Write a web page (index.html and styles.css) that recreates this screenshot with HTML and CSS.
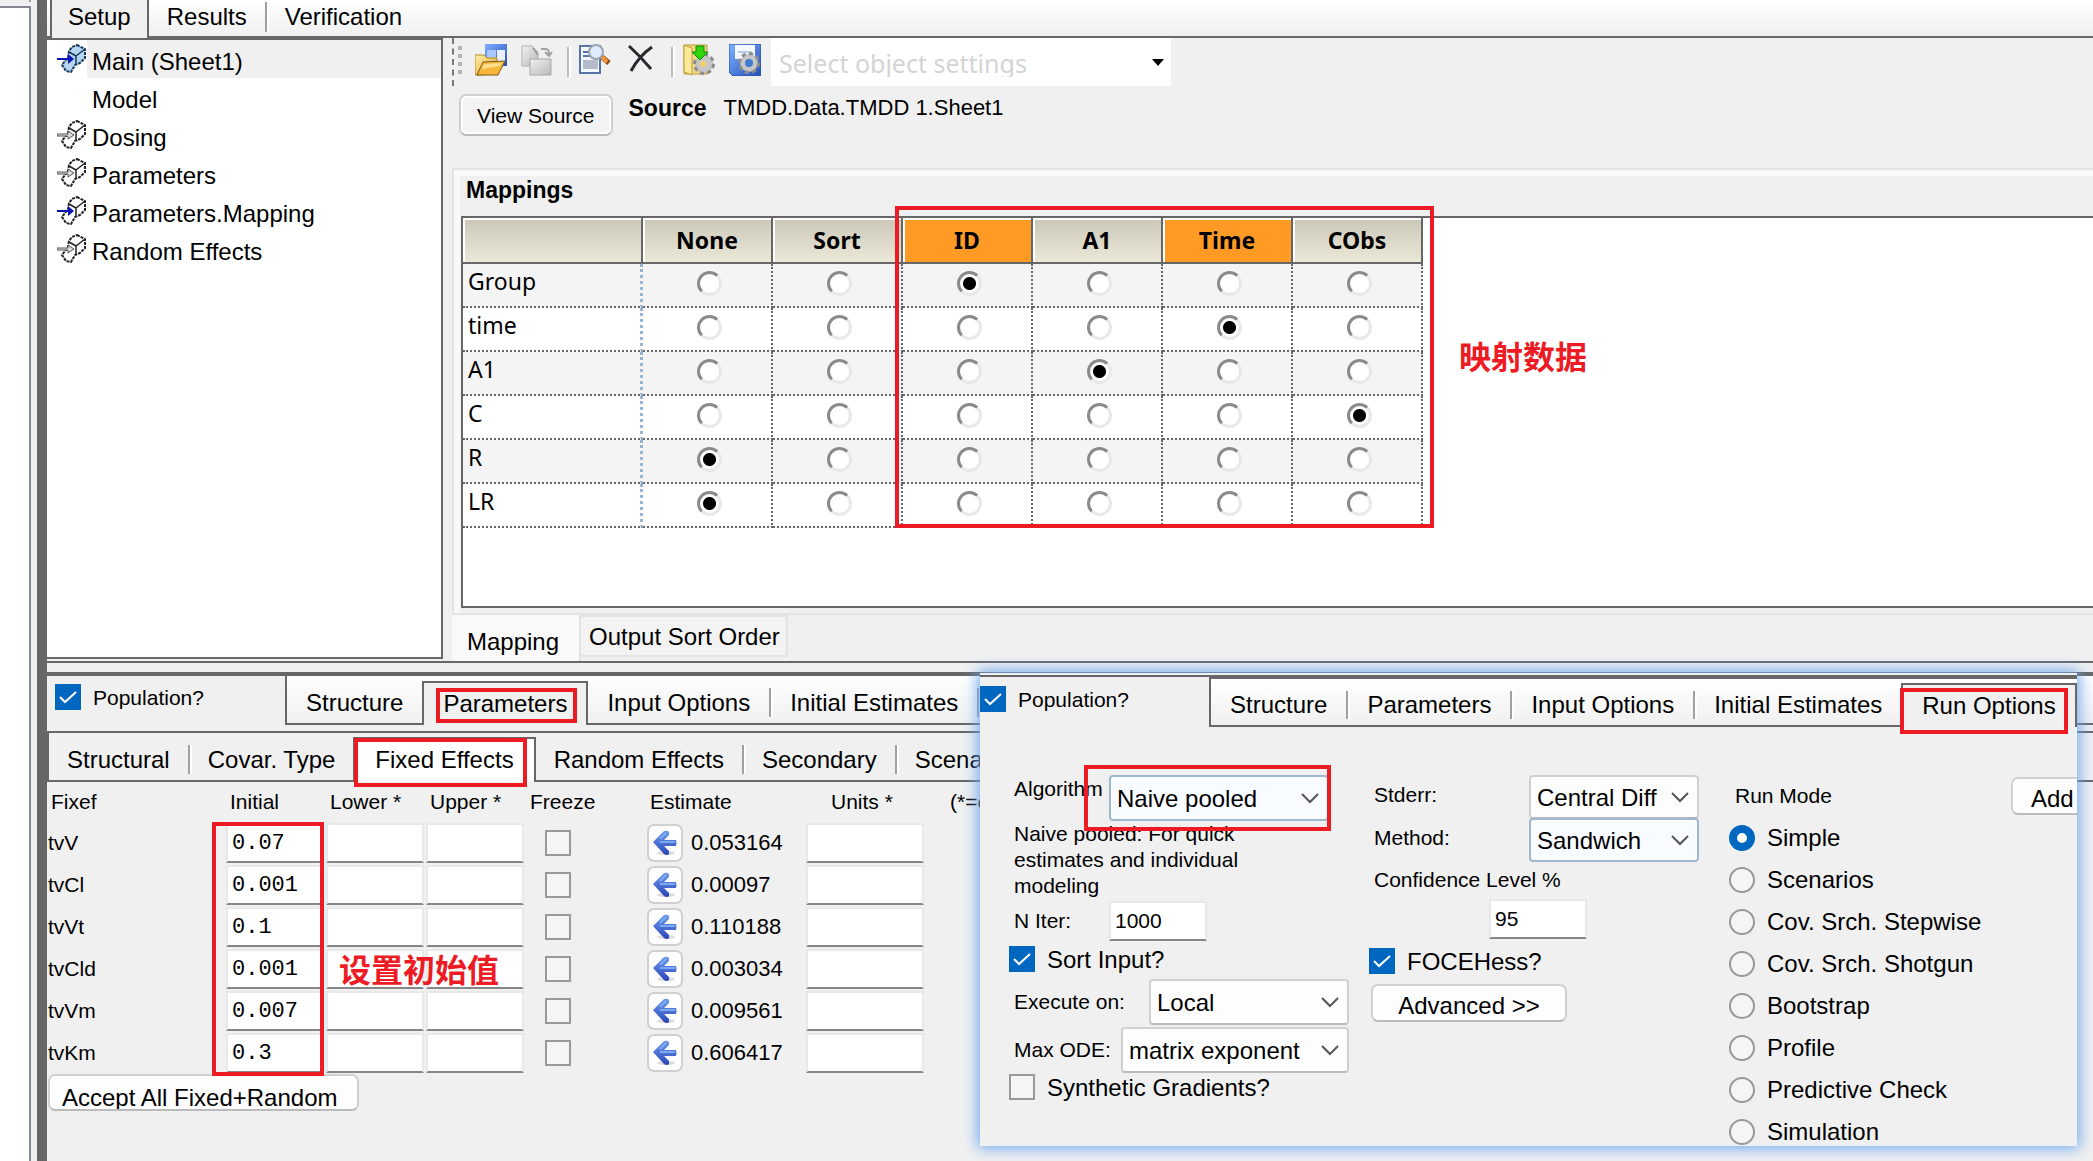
FILE: index.html
```html
<!DOCTYPE html>
<html lang="en">
<head>
<meta charset="utf-8">
<title>Setup</title>
<link rel="stylesheet" href="styles.css">
</head>
<body>
<!-- shared icon shapes -->
<svg class="defs" aria-hidden="true">
    <defs>
        <linearGradient id="gFolder" x1="0" y1="0" x2="1" y2="1"><stop offset="0" stop-color="#fff0a8"/><stop offset="1" stop-color="#e3a02a"/></linearGradient>
        <linearGradient id="gBlue" x1="0" y1="0" x2="1" y2="1"><stop offset="0" stop-color="#7fb0ff"/><stop offset="1" stop-color="#2450b8"/></linearGradient>
        <linearGradient id="gArrow" x1="0" y1="0" x2="0" y2="1"><stop offset="0" stop-color="#6f9ff0"/><stop offset="1" stop-color="#2a43b8"/></linearGradient>
        <linearGradient id="gGrey" x1="0" y1="0" x2="1" y2="1"><stop offset="0" stop-color="#f2f2f2"/><stop offset="1" stop-color="#b8b8b8"/></linearGradient>
        <symbol id="link" viewBox="0 0 30 30">
            <path d="M20 1l8 4v9l-5 5-5 2-4 7-5-1-4-6 6-8 1-6 3-4z" stroke-width="2" stroke-dasharray="3 1"/>
            <path d="M12 8l7 4v8M19 12l9-7" fill="none" stroke-width="1.5"/>
        </symbol>
        <symbol id="left" viewBox="0 0 24 26">
            <ellipse cx="13" cy="23" rx="9" ry="2" fill="#dcdcdc"/>
            <path d="M0 12L11 1q4-1 5 1v3l-5 5h12q1 3 0 6H11l5 5v3q-2 2-5 0z" fill="url(#gArrow)"/>
            <path d="M7 12h15M13 3l-6 6" stroke="#79aaf2" stroke-width="2"/>
        </symbol>
        <symbol id="gear" viewBox="0 0 24 24">
            <circle cx="12" cy="12" r="9" fill="#b9b9b9" stroke="#8e8e8e" stroke-width="4" stroke-dasharray="4 3"/>
            <circle cx="12" cy="12" r="8" fill="#c6c6c6"/>
        </symbol>
    </defs>
</svg>

<div class="side">
    <div class="side-stub"></div>
    <div class="side-box"></div>
</div>

<div class="main">
    <div class="tabs toptabs">
        <button class="tab active">Setup</button>
        <button class="tab">Results</button><span class="sep"></span>
        <button class="tab">Verification</button>
    </div>

    <div class="upper">
        <ul class="tree">
            <li class="selected"><svg class="main-link"><use href="#link"/><path d="M0 14h11v-4l6 5-6 5v-4H0z"/></svg><span>Main (Sheet1)</span></li>
            <li><svg></svg><span>Model</span></li>
            <li><svg class="empty-link"><use href="#link"/><path d="M0 14h11v-3l6 4-6 4v-3H0z"/></svg><span>Dosing</span></li>
            <li><svg class="empty-link"><use href="#link"/><path d="M0 14h11v-3l6 4-6 4v-3H0z"/></svg><span>Parameters</span></li>
            <li><svg class="mapped-link"><use href="#link"/><path d="M0 14h11v-4l6 5-6 5v-4H0z"/></svg><span>Parameters.Mapping</span></li>
            <li><svg class="empty-link"><use href="#link"/><path d="M0 14h11v-3l6 4-6 4v-3H0z"/></svg><span>Random Effects</span></li>
        </ul>

        <div class="mapping">
            <div class="toolbar">
                <span class="grip"></span>
                <button class="tool" aria-label="Open">
                    <svg viewBox="0 0 32 32">
                        <path d="M10 0h22v22H10z" fill="url(#gBlue)"/><path d="M12 6h9v12h-9z" fill="#a9c6ff"/><path d="M22 6h8v12h-8z" fill="#e8f0ff"/>
                        <path d="M0 11h9l3 3h10v4L10 31H0z" fill="url(#gFolder)" stroke="#b58a2c"/><path d="M8 18l22-1-7 14H2z" fill="#f7b73a" stroke="#7a5a1a"/><path d="M9 20l18-1-2 3-18 3z" fill="#ffe08a"/>
                    </svg>
                </button>
                <button class="tool" aria-label="Copy">
                    <svg viewBox="0 0 32 32">
                        <path d="M1 2h10l6 6v14H1z" fill="url(#gGrey)" stroke="#b0b0b0"/><path d="M9 15h21v16H9z" fill="url(#gGrey)" stroke="#a8a8a8"/>
                        <path d="M20 5h5q3 0 3 6M24 8l4 4 3-4M12 4l5 7" fill="none" stroke="#a0a0a0" stroke-width="2"/>
                    </svg>
                </button>
                <span class="toolsep"></span>
                <button class="tool" aria-label="Find">
                    <svg viewBox="0 0 32 32">
                        <path d="M1 2h20v27H1z" fill="#f3f7ff" stroke="#5674a8" stroke-width="2"/><path d="M4 8h8M4 12h7" stroke="#5674a8" stroke-width="2"/><path d="M4 16h15v9H4z" fill="#b4bccb"/>
                        <circle cx="17" cy="8" r="7" fill="#dcecfb" stroke="#9aa4b0" stroke-width="2"/><path d="M23 13l7 6" stroke="#8a4b1c" stroke-width="5"/><path d="M23 13l5 5" stroke="#f5963a" stroke-width="4"/>
                    </svg>
                </button>
                <button class="tool" aria-label="Delete">
                    <svg viewBox="0 0 32 32"><path d="M4 2q11 10 22 23M27 3Q14 12 6 27" fill="none" stroke="#2a2a2e" stroke-width="3"/></svg>
                </button>
                <span class="toolsep"></span>
                <button class="tool" aria-label="Load settings">
                    <svg viewBox="0 0 32 32">
                        <path d="M1 1h23v29H1z" fill="#efd985" stroke="#bd9c38"/><path d="M1 1l8 3v27l-8-3z" fill="#fbe898" stroke="#bd9c38"/>
                        <use href="#gear" x="9" y="8" width="24" height="24"/><circle cx="20" cy="20" r="3" fill="#f3d26a"/>
                        <path d="M13 2h8v6h4l-8 8-8-8h4z" fill="#2fd40a" stroke="#128a05"/>
                    </svg>
                </button>
                <button class="tool" aria-label="Save settings">
                    <svg viewBox="0 0 32 32">
                        <path d="M0 0h32v32H4l-4-4z" fill="url(#gBlue)" stroke="#2b559c"/><path d="M6 1h20v14H6z" fill="#f5f9ff"/><path d="M9 8h14" stroke="#b9cbe6" stroke-width="2"/>
                        <use href="#gear" x="8" y="7" width="24" height="24"/><circle cx="20" cy="19" r="4" fill="#3d7bd0"/>
                    </svg>
                </button>
                <select class="settings" aria-label="Object settings"><option>Select object settings</option></select>
            </div>

            <div class="source">
                <button class="btn">View Source</button>
                <b>Source</b>
                <span>TMDD.Data.TMDD 1.Sheet1</span>
            </div>

            <div class="mappings">
                <h2>Mappings</h2>
                <div class="gridframe">
                    <div class="gridwrap">
                        <table class="maptable">
                            <thead>
                                <tr><th class="name"></th><th>None</th><th>Sort</th><th class="req">ID</th><th>A1</th><th class="req">Time</th><th>CObs</th></tr>
                            </thead>
                            <tbody>
                                <tr><td>Group</td><td><input type="radio" name="group" aria-label="None"></td><td><input type="radio" name="group" aria-label="Sort"></td><td><input type="radio" name="group" aria-label="ID" checked></td><td><input type="radio" name="group" aria-label="A1"></td><td><input type="radio" name="group" aria-label="Time"></td><td><input type="radio" name="group" aria-label="CObs"></td></tr>
                                <tr><td>time</td><td><input type="radio" name="time" aria-label="None"></td><td><input type="radio" name="time" aria-label="Sort"></td><td><input type="radio" name="time" aria-label="ID"></td><td><input type="radio" name="time" aria-label="A1"></td><td><input type="radio" name="time" aria-label="Time" checked></td><td><input type="radio" name="time" aria-label="CObs"></td></tr>
                                <tr><td>A1</td><td><input type="radio" name="a1" aria-label="None"></td><td><input type="radio" name="a1" aria-label="Sort"></td><td><input type="radio" name="a1" aria-label="ID"></td><td><input type="radio" name="a1" aria-label="A1" checked></td><td><input type="radio" name="a1" aria-label="Time"></td><td><input type="radio" name="a1" aria-label="CObs"></td></tr>
                                <tr><td>C</td><td><input type="radio" name="c" aria-label="None"></td><td><input type="radio" name="c" aria-label="Sort"></td><td><input type="radio" name="c" aria-label="ID"></td><td><input type="radio" name="c" aria-label="A1"></td><td><input type="radio" name="c" aria-label="Time"></td><td><input type="radio" name="c" aria-label="CObs" checked></td></tr>
                                <tr><td>R</td><td><input type="radio" name="r" aria-label="None" checked></td><td><input type="radio" name="r" aria-label="Sort"></td><td><input type="radio" name="r" aria-label="ID"></td><td><input type="radio" name="r" aria-label="A1"></td><td><input type="radio" name="r" aria-label="Time"></td><td><input type="radio" name="r" aria-label="CObs"></td></tr>
                                <tr><td>LR</td><td><input type="radio" name="lr" aria-label="None" checked></td><td><input type="radio" name="lr" aria-label="Sort"></td><td><input type="radio" name="lr" aria-label="ID"></td><td><input type="radio" name="lr" aria-label="A1"></td><td><input type="radio" name="lr" aria-label="Time"></td><td><input type="radio" name="lr" aria-label="CObs"></td></tr>
                            </tbody>
                        </table>
                        <div class="mark mark-map"></div>
                    </div>
                    <p class="note" lang="zh">映射数据</p>
                </div>
            </div>
            <div class="viewtabs">
                <button class="viewtab active">Mapping</button>
                <button class="viewtab">Output Sort Order</button>
            </div>
        </div>
    </div>

    <div class="splitter"></div>

    <div class="lower">
        <div class="modelbar">
            <label class="check small"><input type="checkbox" checked>Population?</label>
            <div class="tabs">
                <button class="tab">Structure</button>
                <button class="tab active">Parameters<span class="mark mark-params"></span></button>
                <button class="tab">Input Options</button><span class="sep"></span>
                <button class="tab">Initial Estimates</button><span class="sep"></span>
            </div>
        </div>
        <div class="tabs subtabs">
            <button class="tab">Structural</button><span class="sep"></span>
            <button class="tab">Covar. Type</button>
            <button class="tab active">Fixed Effects<span class="mark mark-fixed"></span></button>
            <button class="tab">Random Effects</button><span class="sep"></span>
            <button class="tab">Secondary</button><span class="sep"></span>
            <button class="tab">Scenarios</button>
        </div>
        <div class="fixefwrap">
            <table class="fixef">
                <thead>
                    <tr><th class="c-name">Fixef</th><th class="c-num">Initial</th><th class="c-num">Lower *</th><th class="c-num">Upper *</th><th class="c-freeze">Freeze</th><th class="c-est">Estimate</th><th class="c-units">Units *</th><th class="c-note">(*=o</th></tr>
                </thead>
                <tbody>
                    <tr><td>tvV</td><td><input type="text" value="0.07" aria-label="tvV initial"></td><td><input type="text" aria-label="tvV lower"></td><td><input type="text" aria-label="tvV upper"></td><td class="freeze"><input type="checkbox" aria-label="tvV freeze"></td><td><span class="est"><button aria-label="Accept tvV"><svg><use href="#left"/></svg></button>0.053164</span></td><td><input type="text" aria-label="tvV units"></td></tr>
                    <tr><td>tvCl</td><td><input type="text" value="0.001" aria-label="tvCl initial"></td><td><input type="text" aria-label="tvCl lower"></td><td><input type="text" aria-label="tvCl upper"></td><td class="freeze"><input type="checkbox" aria-label="tvCl freeze"></td><td><span class="est"><button aria-label="Accept tvCl"><svg><use href="#left"/></svg></button>0.00097</span></td><td><input type="text" aria-label="tvCl units"></td></tr>
                    <tr><td>tvVt</td><td><input type="text" value="0.1" aria-label="tvVt initial"></td><td><input type="text" aria-label="tvVt lower"></td><td><input type="text" aria-label="tvVt upper"></td><td class="freeze"><input type="checkbox" aria-label="tvVt freeze"></td><td><span class="est"><button aria-label="Accept tvVt"><svg><use href="#left"/></svg></button>0.110188</span></td><td><input type="text" aria-label="tvVt units"></td></tr>
                    <tr><td>tvCld</td><td><input type="text" value="0.001" aria-label="tvCld initial"></td><td><input type="text" aria-label="tvCld lower"></td><td><input type="text" aria-label="tvCld upper"></td><td class="freeze"><input type="checkbox" aria-label="tvCld freeze"></td><td><span class="est"><button aria-label="Accept tvCld"><svg><use href="#left"/></svg></button>0.003034</span></td><td><input type="text" aria-label="tvCld units"></td></tr>
                    <tr><td>tvVm</td><td><input type="text" value="0.007" aria-label="tvVm initial"></td><td><input type="text" aria-label="tvVm lower"></td><td><input type="text" aria-label="tvVm upper"></td><td class="freeze"><input type="checkbox" aria-label="tvVm freeze"></td><td><span class="est"><button aria-label="Accept tvVm"><svg><use href="#left"/></svg></button>0.009561</span></td><td><input type="text" aria-label="tvVm units"></td></tr>
                    <tr><td>tvKm</td><td><input type="text" value="0.3" aria-label="tvKm initial"></td><td><input type="text" aria-label="tvKm lower"></td><td><input type="text" aria-label="tvKm upper"></td><td class="freeze"><input type="checkbox" aria-label="tvKm freeze"></td><td><span class="est"><button aria-label="Accept tvKm"><svg><use href="#left"/></svg></button>0.606417</span></td><td><input type="text" aria-label="tvKm units"></td></tr>
                </tbody>
            </table>
            <div class="mark mark-initial"></div>
            <p class="note note-initial" lang="zh">设置初始值</p>
        </div>
        <button class="btn accept"><span>Accept All Fixed+Random</span></button>

        <!-- run options panel floats over the lower half -->
        <div class="popup">
            <div class="modelbar">
                <label class="check small"><input type="checkbox" checked>Population?</label>
                <div class="tabs">
                    <button class="tab">Structure</button><span class="sep"></span>
                    <button class="tab">Parameters</button><span class="sep"></span>
                    <button class="tab">Input Options</button><span class="sep"></span>
                    <button class="tab">Initial Estimates</button>
                    <button class="tab active">Run Options<span class="mark mark-run"></span></button>
                </div>
            </div>
            <div class="runopts">
                <div class="col-algo">
                    <div class="field algo">
                        <label for="algo">Algorithm</label>
                        <select id="algo" class="hot"><option>Naive pooled</option></select>
                        <span class="mark mark-algo"></span>
                    </div>
                    <p class="desc">Naive pooled: For quick estimates and individual modeling</p>
                    <div class="field iter">
                        <label for="niter">N Iter:</label>
                        <input type="text" id="niter" value="1000">
                    </div>
                    <label class="check"><input type="checkbox" checked>Sort Input?</label>
                    <div class="field">
                        <label for="exec">Execute on:</label>
                        <select id="exec" class="w-exec"><option>Local</option></select>
                    </div>
                    <div class="field">
                        <label for="ode">Max ODE:</label>
                        <select id="ode" class="w-ode"><option>matrix exponent</option></select>
                    </div>
                    <label class="check"><input type="checkbox">Synthetic Gradients?</label>
                </div>
                <div class="col-err">
                    <div class="field">
                        <label for="stderr">Stderr:</label>
                        <select id="stderr"><option>Central Diff</option></select>
                    </div>
                    <div class="field">
                        <label for="method">Method:</label>
                        <select id="method" class="hot"><option>Sandwich</option></select>
                    </div>
                    <label class="conf" for="conf">Confidence Level %</label>
                    <input type="text" id="conf" value="95">
                    <label class="check"><input type="checkbox" checked>FOCEHess?</label>
                    <button class="btn adv">Advanced &gt;&gt;</button>
                </div>
                <fieldset class="col-mode">
                    <legend>Run Mode</legend>
                    <label><input type="radio" name="mode" checked>Simple</label>
                    <label><input type="radio" name="mode">Scenarios</label>
                    <label><input type="radio" name="mode">Cov. Srch. Stepwise</label>
                    <label><input type="radio" name="mode">Cov. Srch. Shotgun</label>
                    <label><input type="radio" name="mode">Bootstrap</label>
                    <label><input type="radio" name="mode">Profile</label>
                    <label><input type="radio" name="mode">Predictive Check</label>
                    <label><input type="radio" name="mode">Simulation</label>
                </fieldset>
                <button class="btn add">Add</button>
            </div>
        </div>
    </div>
</div>
</body>
</html>
```
FILE: styles.css
```css
* {
    box-sizing: border-box;
}
body, html {
    margin: 0;
    padding: 0;
}
body {
    display: flex;
    min-height: 100vh;
    overflow: hidden;
    background: #f0f0f0;
    color: #000;
    font: 24px/28px "Liberation Sans", Arial, sans-serif;
}
button, input, select {
    font: inherit;
    color: inherit;
    margin: 0;
    border-radius: 0;
}
button {
    background: none;
    border: 0;
    padding: 0;
    white-space: nowrap;
}
.defs {
    position: absolute;
    width: 0;
    height: 0;
}

/* left strip */
.side {
    flex: none;
    width: 47px;
    border-right: 10px solid #676767;
    padding-right: 6px;
    display: flex;
    flex-direction: column;
}
.side-stub {
    height: 2px;
    margin-bottom: 4px;
    border-right: 2px solid #a0a0a0;
}
.side-box {
    flex: 1;
    background: #fff;
    border-top: 2px solid #828790;
    border-right: 2px solid #828790;
}
.main {
    flex: 1;
    min-width: 0;
    display: flex;
    flex-direction: column;
}

/* tabs */
.tabs {
    display: flex;
    background: linear-gradient(#fff, #f0f0f0);
    border-bottom: 2px solid #676767;
    overflow: visible;
}
.tab {
    flex: none;
    position: relative;
    padding: 6px 18px 0;
}
.tab.active {
    padding-top: 0;
    background: #f0f0f0;
    border: 2px solid #676767;
    border-bottom: 0;
    margin-bottom: -2px;
}
.sep {
    flex: none;
    width: 2px;
    margin: 12px 0 6px;
    background: #a0a0a0;
    box-shadow: 2px 0 #fff;
}
.toptabs {
    height: 38px;
    padding-left: 3px;
}
.toptabs .tab {
    padding: 0 18px 2px;
}
.toptabs .active {
    border-top: 0;
    padding: 0 16px 4px;
}
.toptabs .sep {
    margin: 2px 0 4px;
}

/* object tree */
.upper {
    display: flex;
}
.tree {
    flex: none;
    width: 396px;
    margin: 0;
    padding: 0;
    list-style: none;
    background: #fff;
    border: 2px solid #676767;
    border-left: 0;
    margin-bottom: 2px;
}
.tree li {
    display: flex;
    height: 38px;
    padding-left: 10px;
}
.tree svg {
    flex: none;
    width: 30px;
    height: 30px;
    margin-top: 4px;
    fill: #fff;
    stroke: #222;
}
.tree span {
    flex: 1;
    padding: 8px 5px 0;
}
.tree .selected span {
    background: #f0f0f0;
}
.tree .main-link {
    fill: #b5d5f0;
    stroke: #16395c;
}
.tree path {
    fill: #0a14b4;
    stroke: none;
}
.tree .empty-link path {
    fill: #ddd;
    stroke: #555;
}

/* mapping pane */
.mapping {
    flex: 1;
    min-width: 0;
    padding-left: 9px;
}
.toolbar {
    display: flex;
    height: 48px;
    border-left: 2px dashed #777;
}
.grip {
    width: 4px;
    margin: 8px 13px 8px 4px;
    background: repeating-linear-gradient(#b4b4b4 0 4px, transparent 4px 8px);
}
.tool {
    width: 32px;
    height: 32px;
    margin: 6px 14px 0 0;
}
.tool svg {
    display: block;
    width: 32px;
    height: 32px;
}
.toolsep {
    width: 4px;
    height: 30px;
    margin: 9px 8px 0 0;
    background: linear-gradient(to right, #bdbdbd 50%, #fff 50%);
}
select {
    appearance: none;
    border: 2px solid #d0d0d0;
    border-bottom-color: #bbb;
    border-radius: 4px;
    padding: 2px 34px 0 6px;
    background: #fdfdfd url("data:image/svg+xml,%3Csvg xmlns='http://www.w3.org/2000/svg' width='18' height='12'%3E%3Cpath d='M1 2l8 8 8-8' fill='none' stroke='%23555' stroke-width='2'/%3E%3C/svg%3E") no-repeat right 8px center;
}
select.hot {
    border-color: #9fb8cd;
    background-color: #f8fbff;
}
.settings {
    width: 400px;
    margin-left: -4px;
    border: 0;
    border-radius: 0;
    padding: 2px 30px 0 8px;
    background: #fff url("data:image/svg+xml,%3Csvg xmlns='http://www.w3.org/2000/svg' width='12' height='7'%3E%3Cpath d='M0 0h12l-6 7z'/%3E%3C/svg%3E") no-repeat right 7px center;
    color: #d4d4d4;
    font-family: "Noto Sans", sans-serif;
    font-size: 25px;
}
.source {
    display: flex;
    font-size: 21px;
    padding: 8px 0 32px 7px;
}
.source b {
    margin: 0 17px 0 16px;
    font-size: 23px;
}
.source span {
    font-size: 22px;
}
.btn {
    height: 42px;
    padding: 2px 16px 0;
    background: #f3f3f3;
    border: 2px solid #d0d0d0;
    border-bottom-color: #bbb;
    border-radius: 7px;
    box-shadow: inset 0 0 0 2px #fff;
}
.mappings {
    border: 2px solid #e3e3e3;
    border-right: 0;
    box-shadow: inset 6px 6px #f9f9f9;
    padding: 0 0 5px 7px;
}
.mappings h2 {
    margin: 0 0 6px;
    padding: 0 5px;
    font-size: 23px;
    line-height: 40px;
}
.gridframe {
    display: flex;
    align-items: flex-start;
    background: #fff;
    border: 2px solid #676767;
    border-right: 0;
    padding-bottom: 78px;
}
.gridwrap {
    position: relative;
}
.maptable {
    border-collapse: separate;
    border-spacing: 0;
    table-layout: fixed;
    width: 960px;
    font: 23px/28px "Noto Sans", sans-serif;
}
.maptable th {
    width: 130px;
    height: 46px;
    padding: 0;
    background: linear-gradient(#cbc7b8, #ebe8d8);
    border-right: 2px solid #676767;
    border-bottom: 2px solid #676767;
    box-shadow: inset 2px 2px #fff;
}
.maptable .name {
    width: 180px;
}
.maptable .req {
    background: #ff9a24;
}
.maptable td {
    height: 44px;
    padding: 0 0 4px 4px;
    text-align: center;
    border-right: 2px dotted #676767;
    border-bottom: 2px dotted #676767;
}
.maptable td:first-child {
    text-align: left;
    padding: 0 5px 8px;
    border-right: 3px dotted #9ab4d4;
}
.maptable tr:nth-child(odd) td {
    background: #f4f4f4;
}
.maptable input {
    appearance: none;
    display: block;
    width: 25px;
    height: 25px;
    margin: 0 auto;
    background: #fff;
    border: 3px solid;
    border-color: #8a8a8a #e8e8e8 #e8e8e8 #8a8a8a;
    border-radius: 50%;
}
.maptable input:checked {
    background: radial-gradient(#000 6px, #fff 7px);
}
.viewtabs {
    display: flex;
    align-items: flex-start;
    height: 46px;
}
.viewtab {
    height: 42px;
    background: #f3f3f3;
    border: 2px solid #e3e3e3;
    border-left: 0;
    padding: 2px 6px 0 8px;
}
.viewtab.active {
    height: 46px;
    background: #f9f9f9;
    border: 0;
    border-right: 2px solid #e3e3e3;
    padding: 8px 20px 0 15px;
}

/* red callouts */
.mark {
    position: absolute;
    border: 4px solid #ed1c24;
    pointer-events: none;
}
.note {
    margin: 0;
    color: #ed1c24;
    font: bold 32px/40px "Noto Sans CJK SC", sans-serif;
    white-space: nowrap;
}
.mark-map {
    left: 432px;
    right: -11px;
    top: -12px;
    bottom: 0;
}
.gridframe .note {
    margin: 117px 0 0 36px;
}
.mark-params {
    inset: 5px 9px 2px 12px;
}
.mark-fixed {
    inset: -1px 7px -5px -1px;
}
.mark-initial {
    left: 165px;
    width: 112px;
    top: 40px;
    bottom: -2px;
}
.note-initial {
    position: absolute;
    left: 292px;
    top: 166px;
}
.mark-run {
    inset: 3px 7px -7px -3px;
}
.mark-algo {
    inset: -10px -2px -10px 75px;
}

.splitter {
    height: 15px;
    border-top: 2px solid #676767;
    border-bottom: 4px solid #676767;
}

/* model options */
.lower {
    flex: 1;
    position: relative;
}
.modelbar {
    display: flex;
    height: 49px;
}
.modelbar .tabs {
    flex: 1;
    min-width: 0;
    border-left: 2px solid #676767;
}
.modelbar .tab {
    padding-left: 19px;
    padding-right: 19px;
}
.modelbar .active {
    margin-top: 5px;
}
.modelbar > .check {
    width: 238px;
    padding: 8px 0 0 8px;
}
.check {
    display: flex;
    align-items: flex-start;
    gap: 12px;
}
input[type=checkbox] {
    appearance: none;
    flex: none;
    display: block;
    width: 26px;
    height: 26px;
    border: 2px solid #999;
    background: #f5f5f5;
}
input[type=checkbox]:checked {
    border-color: #0067c0;
    background: #0067c0 url("data:image/svg+xml,%3Csvg xmlns='http://www.w3.org/2000/svg' width='18' height='14'%3E%3Cpath d='M1 7l5 5L17 2' fill='none' stroke='%23fff' stroke-width='2'/%3E%3C/svg%3E") no-repeat center;
}
.small {
    font-size: 21px;
}
.subtabs {
    height: 51px;
    margin-top: 6px;
    background: #f0f0f0;
    border-top: 2px solid #676767;
    border-left: 2px solid #676767;
}
.subtabs .active {
    margin-top: 4px;
    background: #fff;
    padding: 0 20px 2px;
}
.fixefwrap {
    position: relative;
}
.fixef {
    border-collapse: collapse;
    table-layout: fixed;
    width: 1000px;
    font-size: 21px;
}
.fixef th {
    height: 40px;
    padding: 0 0 0 6px;
    text-align: left;
    font-weight: normal;
    white-space: nowrap;
}
.fixef td {
    height: 42px;
    padding: 0 0 0 1px;
}
.fixef .c-name {
    width: 177px;
    padding-left: 4px;
}
.fixef .c-num {
    width: 100px;
}
.fixef .c-freeze {
    width: 120px;
}
.fixef .c-est {
    width: 160px;
}
.fixef .c-units {
    width: 120px;
    padding-left: 27px;
}
.fixef .c-note {
    padding-left: 26px;
}
input[type=text] {
    display: block;
    height: 40px;
    border: 2px solid #e8e8e8;
    border-bottom-color: #868686;
    background: #fff;
    padding: 0 4px;
    font-size: 21px;
}
.fixef input[type=text] {
    width: 98px;
    margin-left: 1px;
    font: 22px "Liberation Mono", monospace;
}
.fixef td:last-child input {
    width: 118px;
}
.freeze input {
    margin-left: 20px;
}
.est {
    display: flex;
    align-items: center;
    gap: 8px;
    font-size: 22px;
}
.est button {
    width: 36px;
    height: 38px;
    margin-left: 2px;
    background: #fdfdfd;
    border: 2px solid #d0d0d0;
    border-radius: 7px;
}
.est svg {
    display: block;
    width: 24px;
    height: 26px;
    margin: 0 auto;
}
.accept {
    height: 37px;
    margin-left: 1px;
    padding: 8px 20px 0 12px;
    background: #fdfdfd;
}
.accept span {
    display: block;
    height: 25px;
    line-height: 28px;
    overflow: hidden;
}

/* run options */
.popup {
    position: absolute;
    right: 16px;
    top: -3px;
    width: 1097px;
    height: 473px;
    background: #f0f0f0;
    border-top: 2px solid #f0f0f0;
    box-shadow: 0 0 14px 2px #6aa6ee;
    overflow: hidden;
}
.popup .modelbar {
    height: 52px;
    border-top: 2px solid #676767;
}
.popup .modelbar > .check {
    width: 229px;
    padding: 9px 0 0 0;
}
.popup .tabs {
    border-top: 2px solid #676767;
}
.popup .modelbar .active {
    margin-top: 4px;
}
.runopts {
    display: flex;
    padding: 48px 0 0 29px;
}
.runopts > * {
    flex: none;
}
.field {
    position: relative;
    display: flex;
    align-items: center;
    justify-content: space-between;
    height: 48px;
}
.field label, .conf {
    font-size: 21px;
    padding-left: 5px;
    white-space: nowrap;
}
.col-algo {
    width: 340px;
}
.col-algo select {
    height: 46px;
}
.algo {
    width: 320px;
    height: 46px;
}
.algo label {
    padding-bottom: 18px;
}
.algo select {
    width: 220px;
}
.desc {
    margin: 0;
    width: 260px;
    padding-left: 5px;
    font-size: 21px;
    line-height: 26px;
}
.iter {
    width: 198px;
    margin: -2px 0 1px;
}
.iter input {
    width: 98px;
}
.col-algo > .check {
    height: 32px;
}
.w-exec {
    width: 200px;
}
.w-ode {
    width: 228px;
}
.col-err {
    width: 330px;
    margin-left: 20px;
}
.col-err .field {
    height: 43px;
}
.col-err .field label {
    padding-bottom: 4px;
}
.col-err select {
    width: 170px;
    height: 44px;
    padding-right: 30px;
}
.conf {
    display: block;
    height: 38px;
    line-height: 38px;
}
#conf {
    width: 98px;
    margin: 0 0 9px 120px;
}
.col-err .check {
    height: 36px;
}
.adv {
    width: 196px;
    height: 38px;
    margin-left: 2px;
    padding-top: 5px;
    background: #fdfdfd;
}
.col-mode {
    width: 282px;
    margin: 0 0 0 30px;
    padding: 0;
    border: 0;
}
.col-mode legend {
    height: 42px;
    padding: 7px 0 0 6px;
    font-size: 21px;
}
.col-mode label {
    display: flex;
    align-items: center;
    gap: 12px;
    height: 42px;
}
.col-mode input {
    appearance: none;
    width: 26px;
    height: 26px;
    border: 2px solid #999;
    border-radius: 50%;
    background: #f5f5f5;
}
.col-mode input:checked {
    border: 8px solid #0067c0;
    background: #fff;
}
.add {
    width: 100px;
    height: 38px;
    margin-top: 2px;
    padding: 5px 0 0 18px;
    background: #fdfdfd;
    text-align: left;
}
```
